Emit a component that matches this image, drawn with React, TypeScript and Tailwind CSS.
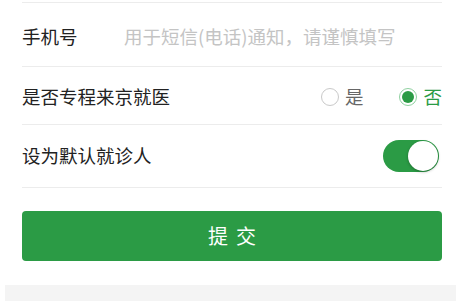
import { useState } from "react";

const green = "bg-[#2b9b45]";

const Radio = ({ label, checked, onClick }: { label: string; checked: boolean; onClick: () => void }) => (
  <button onClick={onClick} className="flex items-center gap-[6px]">
    <span
      className={`w-[18px] h-[18px] rounded-full border flex items-center justify-center ${
        checked ? "border-[#8fd0a0]" : "border-[#c9c9c9]"
      }`}
    >
      {checked && <span className={`w-[12px] h-[12px] rounded-full ${green}`} />}
    </span>
    <span className={`text-[18.5px] ${checked ? "text-[#2b9b45]" : "text-[#666]"}`}>{label}</span>
  </button>
);

export default function App() {
  const [special, setSpecial] = useState(false);
  const [isDefault, setIsDefault] = useState(true);

  return (
    <div
      className="w-[456px] h-[301px] bg-white overflow-hidden flex flex-col"
      style={{ fontFamily: '"Noto Sans CJK SC", "Noto Sans", sans-serif' }}
    >
      <div className="pl-[22px] pr-[14px]">
        <div className="h-[3px] border-b border-[#ececec]" />
        <div className="h-[64px] pt-[5px] flex items-center border-b border-[#ececec]">
          <span className="w-[102px] text-[18.5px] text-[#222]">手机号</span>
          <input
            className="flex-1 text-[18.5px] text-[#222] placeholder:text-[#c4c4c4] outline-none"
            placeholder="用于短信(电话)通知，请谨慎填写"
          />
        </div>
        <div className="h-[58px] pt-[2px] flex items-center justify-between border-b border-[#ececec]">
          <span className="text-[18.5px] text-[#222]">是否专程来京就医</span>
          <div className="flex items-center gap-[36px]">
            <Radio label="是" checked={special} onClick={() => setSpecial(true)} />
            <Radio label="否" checked={!special} onClick={() => setSpecial(false)} />
          </div>
        </div>
        <div className="h-[63px] flex items-center justify-between border-b border-[#ececec]">
          <span className="text-[18.5px] text-[#222]">设为默认就诊人</span>
          <button
            onClick={() => setIsDefault(!isDefault)}
            className={`w-[56px] h-[32px] rounded-full p-[1px] flex items-center mr-[3px] ${
              isDefault ? `${green} justify-end` : "bg-[#e5e5e5] justify-start"
            }`}
          >
            <span className="w-[30px] h-[30px] rounded-full bg-white shadow-[0_1px_3px_rgba(0,0,0,0.3)]" />
          </button>
        </div>
        <button className={`mt-[23px] w-full h-[50px] rounded-[4px] ${green} text-white text-[20px] tracking-[8px] pl-[8px]`}>
          提交
        </button>
      </div>
      <div className="mt-[24px] ml-[5px] flex-1 bg-[#f4f4f4]" />
    </div>
  );
}
